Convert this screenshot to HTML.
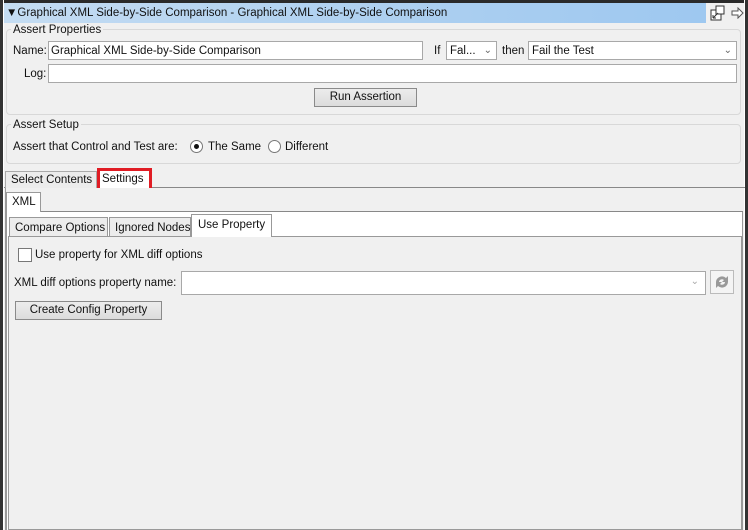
<!DOCTYPE html>
<html><head><meta charset="utf-8"><style>
*{box-sizing:border-box;margin:0;padding:0}
body{width:748px;height:530px;background:#f0f0f0;font-family:"Liberation Sans","Noto Sans CJK JP",sans-serif;font-size:11.5px;color:#111;position:relative;overflow:hidden}
.a{position:absolute;white-space:nowrap}
.inp{position:absolute;background:#fff;border:1px solid #a8a8a8}
.btn{position:absolute;background:linear-gradient(#ececec,#dcdcdc);border:1px solid #8a8a8a;text-align:center;line-height:17px}
.grp{position:absolute;border:1px solid #d8d8d8;border-radius:4px}
</style></head><body>
<div class="a" style="left:0;top:0;width:748px;height:3px;background:#2a2a2a"></div>
<div class="a" style="left:0;top:0;width:3px;height:530px;background:#333"></div>
<div class="a" style="top:0;width:1px;height:530px;background:#fff;left:3px"></div>
<div class="a" style="left:745px;top:0;width:3px;height:530px;background:#333"></div>
<div class="a" style="left:744px;top:0;width:1px;height:530px;background:#fff"></div>
<div class="a" style="left:4px;top:3px;width:702px;height:20px;background:linear-gradient(90deg,#c4dcf2,#a8cdf0 70%,#9ec8f0)"></div>
<div class="a" style="left:6px;top:7px;color:#111">▼Graphical XML Side-by-Side Comparison - Graphical XML Side-by-Side Comparison</div>
<svg class="a" style="left:710px;top:5px" width="16" height="16"><rect x="1" y="5" width="10" height="10" fill="#fff" stroke="#333"/><rect x="6" y="1" width="8" height="8" fill="#fff" stroke="#333"/><path d="M3 13 L8 8 M3 13 h3 M3 13 v-3" stroke="#333" fill="none"/></svg>
<svg class="a" style="left:731px;top:7px" width="14" height="12"><path d="M1 4 H7 V1 L12 6 L7 11 V8 H1 Z" fill="#fff" stroke="#555"/></svg>

<div class="grp" style="left:6px;top:29px;width:735px;height:86px"></div>
<div class="a" style="left:11px;top:24px;background:#f0f0f0;padding:0 2px">Assert Properties</div>
<div class="a" style="left:13px;top:45px">Name:</div>
<div class="inp" style="left:48px;top:41px;width:375px;height:19px;padding:3px 2px">Graphical XML Side-by-Side Comparison</div>
<div class="a" style="left:434px;top:45px">If</div>
<div class="inp" style="left:446px;top:41px;width:51px;height:19px;padding:3px 3px">Fal...<span style="position:absolute;right:4px;color:#666;font-size:10px">⌄</span></div>
<div class="a" style="left:502px;top:45px">then</div>
<div class="inp" style="left:528px;top:41px;width:209px;height:19px;padding:3px 3px">Fail the Test<span style="position:absolute;right:4px;color:#666;font-size:10px">⌄</span></div>
<div class="a" style="left:24px;top:68px">Log:</div>
<div class="inp" style="left:48px;top:64px;width:689px;height:19px"></div>
<div class="btn" style="left:314px;top:88px;width:103px;height:19px">Run Assertion</div>

<div class="grp" style="left:6px;top:124px;width:735px;height:40px"></div>
<div class="a" style="left:11px;top:119px;background:#f0f0f0;padding:0 2px">Assert Setup</div>
<div class="a" style="left:13px;top:141px">Assert that Control and Test are:</div>
<div class="a" style="left:190px;top:140px;width:13px;height:13px;border:1px solid #777;border-radius:50%;background:#fff"><div style="position:absolute;left:3px;top:3px;width:5px;height:5px;border-radius:50%;background:#111"></div></div>
<div class="a" style="left:208px;top:141px">The Same</div>
<div class="a" style="left:268px;top:140px;width:13px;height:13px;border:1px solid #777;border-radius:50%;background:#fff"></div>
<div class="a" style="left:285px;top:141px">Different</div>

<div class="a" style="left:4px;top:187px;width:741px;height:1px;background:#888"></div>
<div class="a" style="left:5px;top:171px;width:92px;height:17px;border:1px solid #aaa;border-bottom:none;background:#ececec;padding:2px 0 0 5px">Select Contents</div>
<div class="a" style="left:97px;top:168px;width:55px;height:24px;border:3px solid #e01c24;background:#fff;padding:1px 0 0 2px;line-height:14px">Settings</div>

<div class="a" style="left:5px;top:188px;width:739px;height:342px;border-left:1px solid #999;background:#f0f0f0"></div>
<div class="a" style="left:41px;top:211px;width:702px;height:1px;background:#888"></div>
<div class="a" style="left:6px;top:192px;width:35px;height:20px;border:1px solid #999;border-bottom:none;background:#fff;padding:3px 0 0 5px">XML</div>
<div class="a" style="left:6px;top:212px;width:737px;height:318px;border-left:1px solid #999;border-right:1px solid #999;background:#fff"></div>
<div class="a" style="left:8px;top:236px;width:734px;height:294px;border:1px solid #999;background:#f0f0f0"></div>
<div class="a" style="left:9px;top:217px;width:99px;height:19px;border:1px solid #999;border-bottom:none;background:#ececec;padding:4px 0 0 5px">Compare Options</div>
<div class="a" style="left:109px;top:217px;width:82px;height:19px;border:1px solid #999;border-bottom:none;background:#ececec;padding:4px 0 0 5px">Ignored Nodes</div>
<div class="a" style="left:191px;top:214px;width:81px;height:23px;border:1px solid #999;border-bottom:none;background:#fff;padding:4px 0 0 6px">Use Property</div>

<div class="a" style="left:18px;top:248px;width:14px;height:14px;border:1px solid #777;background:#fff"></div>
<div class="a" style="left:35px;top:249px">Use property for XML diff options</div>
<div class="a" style="left:14px;top:277px">XML diff options property name:</div>
<div class="inp" style="left:181px;top:271px;width:525px;height:24px"><span style="position:absolute;right:6px;top:4px;color:#aaa;font-size:10px">⌄</span></div>
<div class="a" style="left:710px;top:270px;width:24px;height:24px;border:1px solid #bbb;background:#f4f4f4"><svg width="22" height="22"><path d="M5 11 A6 6 0 0 1 15 7 L17 5 V11 H11 L13 9 A3 3 0 0 0 8 11 Z M17 11 A6 6 0 0 1 7 15 L5 17 V11 H11 L9 13 A3 3 0 0 0 14 11 Z" fill="#999"/></svg></div>
<div class="btn" style="left:15px;top:301px;width:147px;height:19px">Create Config Property</div>
</body></html>
